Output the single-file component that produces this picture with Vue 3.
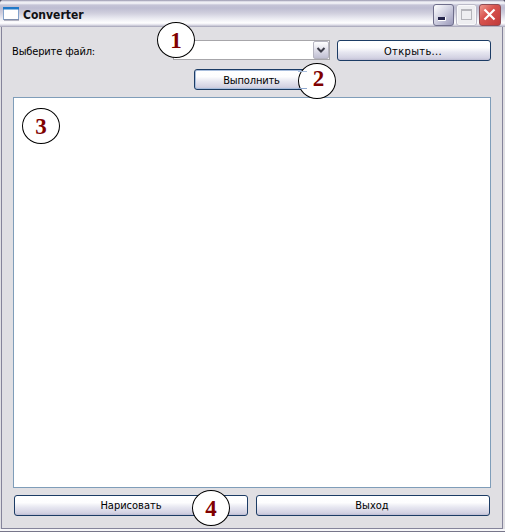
<script setup>
import { ref } from 'vue'

const file = ref('')
const output = ref('')
</script>

<template>
  <div class="window">
    <header class="titlebar">
      <svg class="app-icon" width="16" height="14" viewBox="0 0 16 14">
        <rect x="0.5" y="0.5" width="15" height="12" fill="#fff" stroke="#83a3cc" />
        <rect x="0" y="0" width="16" height="2.5" fill="#1f78c8" />
        <path d="M1 13H16" stroke="#77778c" />
      </svg>
      <span class="title">Converter</span>
      <div class="controls">
        <span class="ctl min">
          <svg width="19" height="19"><rect x="4" y="12" width="7" height="3" fill="#25254c" /><path d="M4 15.5H11.5V12" fill="none" stroke="#fff" /></svg>
        </span>
        <span class="ctl max">
          <svg width="19" height="19"><rect x="4.5" y="4.5" width="10" height="10" fill="#eeeef1" stroke="#b5b5bb" /><path d="M4 5H15" stroke="#b5b5bb" stroke-width="2" /></svg>
        </span>
        <span class="ctl close">
          <svg width="20" height="19"><path d="M4.5 4.5L14.5 14.5M14.5 4.5L4.5 14.5" stroke="#fff" stroke-width="2.2" /></svg>
        </span>
      </div>
    </header>

    <main class="client">
      <div class="row first">
        <label class="label">Выберите файл:</label>
        <div class="combo">
          <span class="value">{{ file }}</span>
          <span class="arrow">
            <svg width="14" height="16"><path d="M3.5 6L7 9.5L10.5 6" fill="none" stroke="#3c3c48" stroke-width="2" /></svg>
          </span>
          <span class="badge one">1</span>
        </div>
        <button class="btn open">Открыть...</button>
      </div>
      <div class="row second">
        <button class="btn run">Выполнить<span class="badge two">2</span></button>
      </div>
      <div class="output">{{ output }}<span class="badge three">3</span></div>
      <div class="row bottom">
        <button class="btn">Нарисовать<span class="badge four">4</span></button>
        <button class="btn">Выход</button>
      </div>
    </main>
  </div>
</template>

<style>
body {
  margin: 0;
  background: #54536a;
}
</style>

<style scoped>
.window {
  box-sizing: border-box;
  width: 505px;
  height: 532px;
  display: flex;
  flex-direction: column;
  overflow: hidden;
  border-radius: 4px 4px 0 0;
  background: linear-gradient(#e0dfe3 0 529px, #f6f6f8 529px 531px, #77768a 531px);
  font-family: "DejaVu Sans Condensed", "DejaVu Sans", sans-serif;
  font-stretch: condensed;
  font-size: 11px;
  color: #000;
}
.titlebar {
  box-sizing: border-box;
  flex: none;
  height: 27px;
  display: flex;
  align-items: flex-start;
  padding: 7px 4px 0 3px;
  background: linear-gradient(#85849d 0, #d2d1df 1px, #f8f8fb 3px, #c5c4d7 5px, #bebdd2 8px, #cfcedd 13px, #e8e8f0 18px, #fff 23px, #dddce7 25px, #a09fb4 27px);
}
.app-icon {
  flex: none;
}
.title {
  margin-left: 4px;
  line-height: 17px;
  font-size: 12px;
  font-weight: bold;
  color: #101014;
}
.controls {
  display: flex;
  gap: 2px;
  margin: -3px 0 0 auto;
}
.ctl {
  box-sizing: border-box;
  width: 21px;
  height: 22px;
  border: 1px solid #6f6e8b;
  border-radius: 3px;
}
.ctl svg {
  display: block;
}
.min {
  background: linear-gradient(135deg, #fff 0, #d3d3e3 45%, #9a99ba 100%);
}
.max {
  border-color: #bbbac8;
  background: #eeeef1;
  box-shadow: inset 0 0 0 1px #f9f9fb;
}
.close {
  width: 22px;
  border-color: #8e4c55;
  background: linear-gradient(135deg, #ee9a90 0, #d9544f 40%, #c03a3a 100%);
}
.client {
  box-sizing: border-box;
  flex: none;
  height: 502px;
  margin: 0 2px 0 1px;
  padding: 13px 11px 12px;
  border: 1px solid #85849b;
  border-top: 0;
  display: flex;
  flex-direction: column;
}
.row {
  display: flex;
  flex: none;
}
.first {
  height: 21px;
}
.label {
  width: 161px;
  margin-left: -1px;
  line-height: 23px;
  letter-spacing: -0.15px;
}
.combo {
  position: relative;
  box-sizing: border-box;
  display: flex;
  justify-content: flex-end;
  width: 157px;
  height: 20px;
  border: 1px solid #a7a6aa;
  background: #fff;
}
.value {
  flex: 1;
}
.arrow {
  box-sizing: border-box;
  width: 16px;
  height: 18px;
  border: 1px solid #b5b4c0;
  border-radius: 2px;
  background: linear-gradient(#fff, #d9d8e5 60%, #c0bfd2);
}
.arrow svg {
  display: block;
}
.btn {
  position: relative;
  box-sizing: border-box;
  height: 21px;
  padding: 0;
  border: 1px solid #1c3c65;
  border-radius: 3px;
  background: linear-gradient(#fff 0, #fdfdfe 35%, #e6e6f0 60%, #d2d1e2 90%, #bdbcd2 100%);
  font: inherit;
  line-height: 19px;
  color: #000;
  text-align: center;
}
.open {
  width: 154px;
  margin-left: 7px;
  padding: 1px 2px 0 0;
  letter-spacing: 0.35px;
}
.second {
  height: 22px;
  margin-top: 8px;
  padding-left: 181px;
}
.run {
  width: 115px;
  padding-top: 1px;
  box-shadow: inset 0 0 0 1px #a9bedd;
  letter-spacing: -0.15px;
}
.output {
  position: relative;
  box-sizing: border-box;
  flex: none;
  height: 391px;
  width: 478px;
  margin-top: 6px;
  border: 1px solid #7f9db9;
  background: #fff;
}
.bottom {
  gap: 8px;
  margin-top: 7px;
  padding-left: 1px;
}
.bottom .btn {
  flex: none;
  width: 234px;
}
.bottom .btn + .btn {
  padding-right: 2px;
}
.badge {
  position: absolute;
  z-index: 1;
  box-sizing: border-box;
  width: 38px;
  height: 36px;
  border: 1px solid #000;
  border-radius: 50%;
  background: #fff;
  color: #800000;
  font: bold 23px/35px "Liberation Serif", serif;
  letter-spacing: 0;
  text-align: center;
}
.one {
  left: -17px;
  top: -19px;
}
.two {
  left: 103px;
  top: -7px;
  line-height: 30px;
  padding-left: 3px;
}
.two::before {
  content: "";
  position: absolute;
  left: -1px;
  top: 7px;
  width: 9px;
  height: 16px;
  border-top: 1px solid #a9bedd;
  border-bottom: 1px solid #8fa8d0;
}
.three {
  left: 8px;
  top: 10px;
}
.four {
  left: 177px;
  top: -6px;
}
</style>
